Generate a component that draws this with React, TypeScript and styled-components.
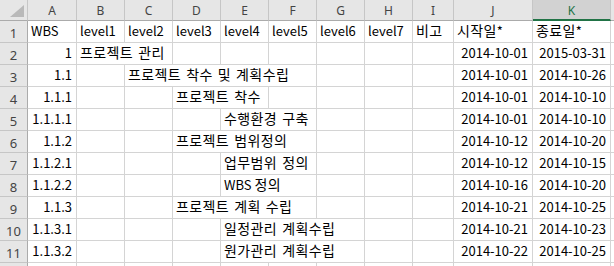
import React from 'react';
import styled, { createGlobalStyle } from 'styled-components';

const GlobalStyle = createGlobalStyle`
	html, body {
		margin: 0;
		padding: 0;
		background: #ffffff;
		overflow: hidden;
	}
`;

const GRID = '#d4d4d4';
const HEAD_BG = '#e6e6e6';
const HEAD_LINE = '#c6c6c6';
const GREEN = '#217346';

const Sheet = styled.div`
	display: grid;
	grid-template-columns: 28px 49px repeat(7, 48px) 41px 79px 78px 1fr;
	grid-template-rows: 21px;
	grid-auto-rows: 22px;
	width: 614px;
	height: 266px;
	overflow: hidden;
	background: #ffffff;
`;

const Corner = styled.div`
	position: relative;
	background: ${HEAD_BG};
	border-right: 1px solid ${HEAD_LINE};
	border-bottom: 1px solid #ababab;
	box-sizing: border-box;

	svg {
		position: absolute;
		right: 3px;
		bottom: 3px;
	}
`;

const ColHeader = styled.div<{ $active?: boolean }>`
	display: flex;
	align-items: center;
	justify-content: center;
	box-sizing: border-box;
	background: ${(p) => (p.$active ? '#d2d2d2' : HEAD_BG)};
	border-right: 1px solid ${HEAD_LINE};
	border-bottom: ${(p) => (p.$active ? `2px solid ${GREEN}` : '1px solid #ababab')};
	color: ${(p) => (p.$active ? GREEN : '#444444')};
	font-family: 'Noto Sans', 'Liberation Sans', sans-serif;
	font-size: 12px;
	padding-top: 1px;
`;

const RowHeader = styled.div`
	display: flex;
	align-items: center;
	justify-content: center;
	box-sizing: border-box;
	background: ${HEAD_BG};
	border-right: 1px solid #ababab;
	border-bottom: 1px solid ${HEAD_LINE};
	color: #444444;
	font-family: 'Noto Sans', 'Liberation Sans', sans-serif;
	font-size: 13px;
	padding-top: 2px;
`;

const Cell = styled.div<{ $span?: number; $right?: boolean }>`
	grid-column: span ${(p) => p.$span ?? 1};
	display: flex;
	align-items: flex-end;
	justify-content: ${(p) => (p.$right ? 'flex-end' : 'flex-start')};
	box-sizing: border-box;
	padding: 0 4px 2px 3px;
	border-right: 1px solid ${GRID};
	border-bottom: 1px solid ${GRID};
	font-family: 'Noto Sans CJK KR', 'Noto Sans', sans-serif;
	font-size: 13px;
	line-height: 18px;
	color: #000000;
	white-space: pre;
	overflow: visible;
`;

// Hangul runs are set a little larger and looser, the way Malgun Gothic looks
const Hangul = styled.span`
	font-size: 14px;
	letter-spacing: 0.4px;
	word-spacing: 1.5px;
	line-height: 18px;
`;

const CellText = ({ text }: { text: string }) => (
	<span>
		{text.split(/([가-힣]+(?: [가-힣]+)*)/).map((part, i) =>
			/[가-힣]/.test(part) ? <Hangul key={i}>{part}</Hangul> : <React.Fragment key={i}>{part}</React.Fragment>
		)}
	</span>
);

const columns = ['A', 'B', 'C', 'D', 'E', 'F', 'G', 'H', 'I', 'J', 'K', ''];

type CellData = { text?: string; span?: number; right?: boolean };

type Task = { wbs: string; level: number; span: number; name: string; start: string; end: string };

const tasks: Task[] = [
	{ wbs: '1', level: 0, span: 2, name: '프로젝트 관리', start: '2014-10-01', end: '2015-03-31' },
	{ wbs: '1.1', level: 1, span: 4, name: '프로젝트 착수 및 계획수립', start: '2014-10-01', end: '2014-10-26' },
	{ wbs: '1.1.1', level: 2, span: 2, name: '프로젝트 착수', start: '2014-10-01', end: '2014-10-10' },
	{ wbs: '1.1.1.1', level: 3, span: 2, name: '수행환경 구축', start: '2014-10-01', end: '2014-10-10' },
	{ wbs: '1.1.2', level: 2, span: 3, name: '프로젝트 범위정의', start: '2014-10-12', end: '2014-10-20' },
	{ wbs: '1.1.2.1', level: 3, span: 2, name: '업무범위 정의', start: '2014-10-12', end: '2014-10-15' },
	{ wbs: '1.1.2.2', level: 3, span: 2, name: 'WBS 정의', start: '2014-10-16', end: '2014-10-20' },
	{ wbs: '1.1.3', level: 2, span: 3, name: '프로젝트 계획 수립', start: '2014-10-21', end: '2014-10-25' },
	{ wbs: '1.1.3.1', level: 3, span: 3, name: '일정관리 계획수립', start: '2014-10-21', end: '2014-10-23' },
	{ wbs: '1.1.3.2', level: 3, span: 3, name: '원가관리 계획수립', start: '2014-10-22', end: '2014-10-25' },
];

const headerRow: CellData[] = [
	'WBS', 'level1', 'level2', 'level3', 'level4', 'level5', 'level6', 'level7', '비고', '시작일*', '종료일*', '',
].map((text) => ({ text }));

const taskRow = (t: Task): CellData[] => {
	const cells: CellData[] = [{ text: t.wbs, right: true }];
	// columns B..I are 8 slots; the task name spills over the empty ones after it
	for (let i = 0; i < t.level; i++) cells.push({});
	cells.push({ text: t.name, span: t.span });
	for (let i = t.level + t.span; i < 8; i++) cells.push({});
	cells.push({ text: t.start, right: true });
	cells.push({ text: t.end, right: true });
	cells.push({});
	return cells;
};

const rows: CellData[][] = [headerRow, ...tasks.map(taskRow), Array.from({ length: 12 }, () => ({}))];

const App = () => {
	return (
		<>
			<GlobalStyle />
			<Sheet>
				<Corner>
					<svg width="14" height="12" viewBox="0 0 14 12">
						<polygon points="14,0 14,12 0,12" fill="#b9b9b9" />
					</svg>
				</Corner>
				{columns.map((c, i) => (
					<ColHeader key={i} $active={c === 'K'}>
						{c}
					</ColHeader>
				))}
				{rows.map((row, r) => (
					<React.Fragment key={r}>
						{/* the last row is only a sliver, its number is out of view */}
						<RowHeader>{r < rows.length - 1 ? r + 1 : ''}</RowHeader>
						{row.map((cell, i) => (
							<Cell key={i} $span={cell.span} $right={cell.right}>
								{cell.text ? <CellText text={cell.text} /> : null}
							</Cell>
						))}
					</React.Fragment>
				))}
			</Sheet>
		</>
	);
};

export default App;
